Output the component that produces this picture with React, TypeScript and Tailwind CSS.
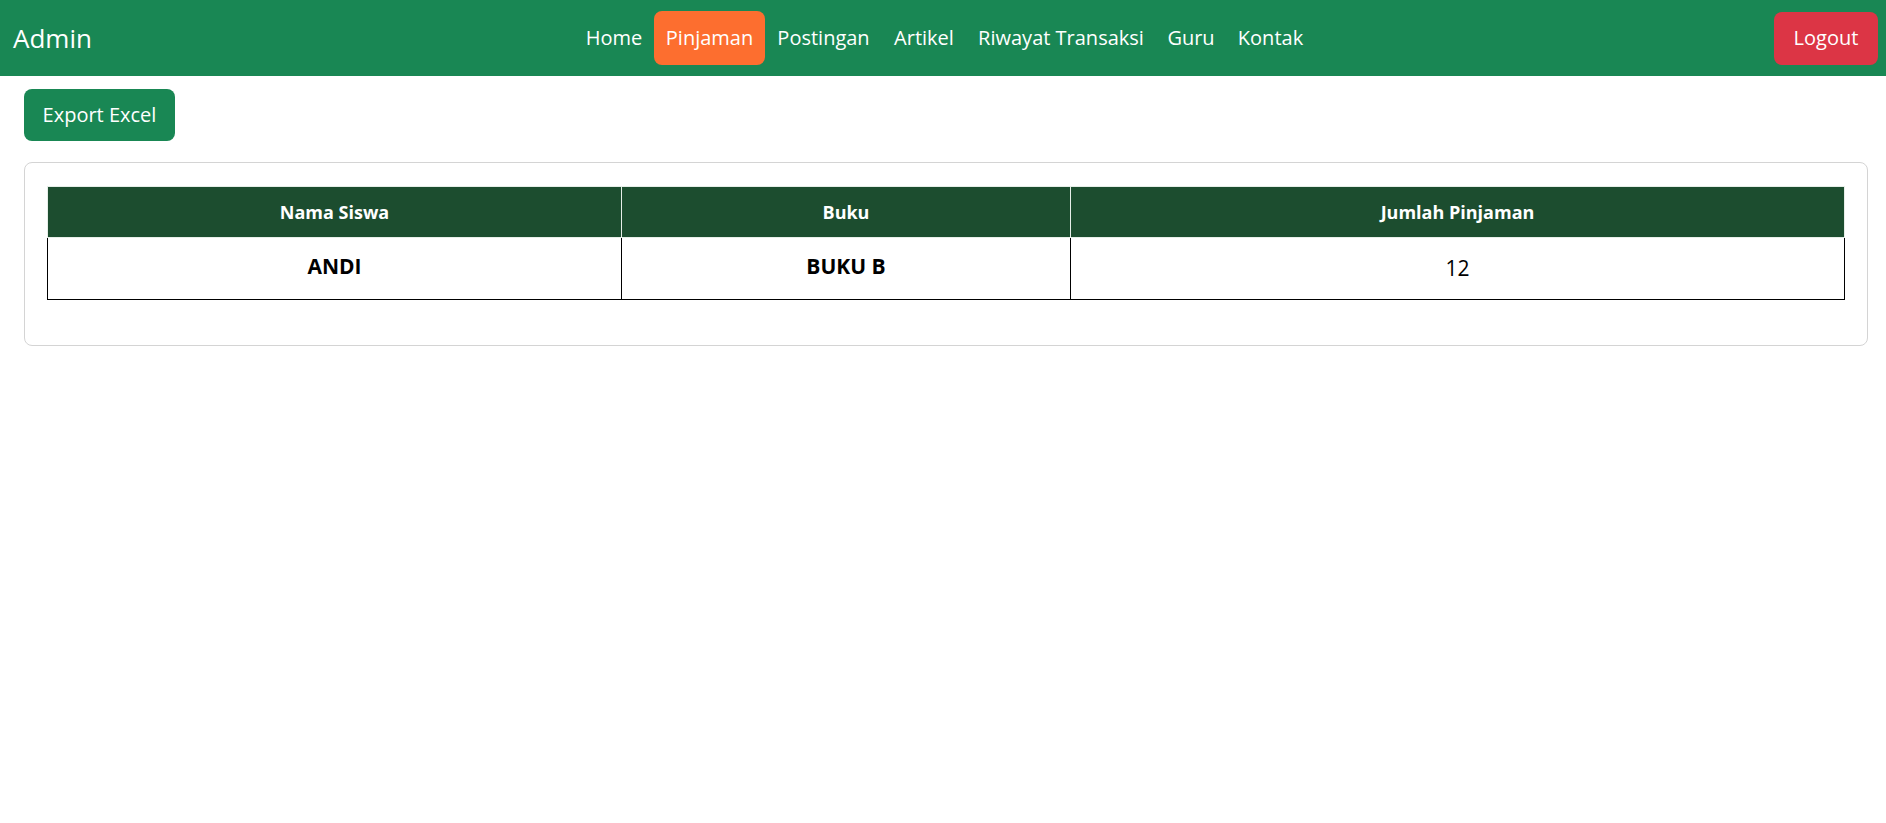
const links = [
  { label: 'Home', w: 'w-[80px]' },
  { label: 'Pinjaman', w: 'w-[111px]', active: true },
  { label: 'Postingan', w: 'w-[117px]' },
  { label: 'Artikel', w: 'w-[84px]' },
  { label: 'Riwayat Transaksi', w: 'w-[190px]' },
  { label: 'Guru', w: 'w-[70px]' },
  { label: 'Kontak', w: 'w-[89px]' },
]

function Navbar() {
  return (
    <nav className="flex h-[76px] items-center bg-[#198754] pl-[13px] pr-[8px] text-white">
      <a href="#" className="w-[561px] text-[26px] leading-none">
        Admin
      </a>
      <ul className="flex items-center">
        {links.map((l) => (
          <li key={l.label}>
            <a
              href="#"
              className={`flex h-[54px] items-center justify-center rounded-lg text-[20px] ${l.w} ${
                l.active ? 'bg-[#fd6e2f]' : ''
              }`}
            >
              {l.label}
            </a>
          </li>
        ))}
      </ul>
      <button className="ml-auto h-[53px] w-[104px] rounded-lg bg-[#dc3545] text-[20px] text-white">
        Logout
      </button>
    </nav>
  )
}

export default function App() {
  return (
    <div className="min-h-screen bg-white font-['Open_Sans',sans-serif]">
      <Navbar />
      <main className="pl-[24px] pr-[18px]">
        <button className="mt-[13px] h-[52px] w-[151px] rounded-lg bg-[#198754] text-[20px] text-white">
          Export Excel
        </button>
        <div className="mt-[21px] rounded-lg border border-[#d4d4d4] px-[22px] pt-[23px] pb-[45px]">
          <table className="w-full border-collapse text-center">
            <thead>
              <tr className="h-[51px] bg-[#1c4d2f] text-[18px] font-bold text-white">
                <th className="w-[574px] border border-[#e6eee8]">Nama Siswa</th>
                <th className="w-[449px] border border-[#e6eee8]">Buku</th>
                <th className="border border-[#e6eee8]">Jumlah Pinjaman</th>
              </tr>
            </thead>
            <tbody>
              <tr className="h-[62px] text-[21px] text-black">
                <td className="border border-black pb-[4px] font-bold">ANDI</td>
                <td className="border border-black pb-[4px] font-bold">BUKU B</td>
                <td className="border border-black pt-[1px]">12</td>
              </tr>
            </tbody>
          </table>
        </div>
      </main>
    </div>
  )
}
